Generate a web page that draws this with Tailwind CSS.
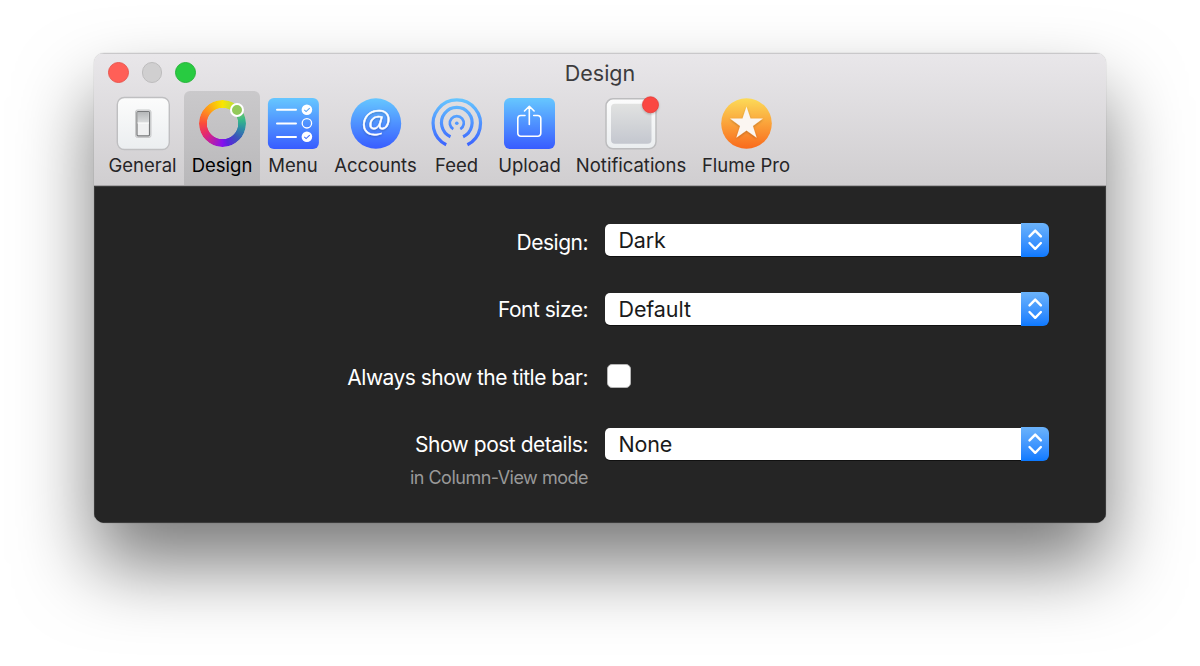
<!DOCTYPE html>
<html lang="en">
<head>
<meta charset="utf-8">
<title>Design</title>
<script src="https://cdn.jsdelivr.net/npm/@tailwindcss/browser@4"></script>
</head>
<body class="h-[666px] w-[1200px] overflow-hidden bg-white pl-[94px] pt-[53px] font-['Inter','Liberation_Sans',sans-serif]">
<svg class="absolute size-0" aria-hidden="true">
  <defs>
    <linearGradient id="blue" x1="0" y1="5" x2="0" y2="55" gradientUnits="userSpaceOnUse"><stop stop-color="#65c5ff"/><stop offset="1" stop-color="#385cff"/></linearGradient>
    <linearGradient id="orange" x1="0" y1="0" x2="0" y2="1"><stop stop-color="#fcdb58"/><stop offset="1" stop-color="#f96a1c"/></linearGradient>
    <linearGradient id="plate" x1="0" y1="0" x2="0" y2="1"><stop stop-color="#fcfcfc"/><stop offset="1" stop-color="#ebeef0"/></linearGradient>
    <linearGradient id="inset" x1="0" y1="0" x2="0" y2="1"><stop stop-color="#e1e2e1"/><stop offset="1" stop-color="#c4c7cf"/></linearGradient>
    <linearGradient id="knob" x1="0" y1="0" x2="0" y2="1"><stop stop-color="#b5b7b9"/><stop offset="1" stop-color="#dcdedf"/></linearGradient>
    <filter id="soft" x="-20%" y="-20%" width="140%" height="150%"><feDropShadow dx="0" dy="1" stdDeviation=".8" flood-color="#000" flood-opacity=".25"/></filter>
    <g id="arrows" fill="none" stroke="#fff" stroke-width="2.4" stroke-linecap="round" stroke-linejoin="round"><path d="M8.5 13.4 14.2 7.6l5.7 5.8M8.5 20l5.7 5.8 5.7-5.8"/></g>
  </defs>
</svg>
<main class="flex h-[470px] w-[1012px] flex-col overflow-hidden rounded-[10px] shadow-[0_0_1px_0_rgba(0,0,0,0.4),0_42px_76px_rgba(0,0,0,0.52)]">
  <header class="flex h-[133px] flex-col border-b border-[#a5a3a5] bg-linear-to-b from-[#e9e7ea] to-[#d0ced0] shadow-[inset_0_1px_0_#c9c8ca]">
    <div class="grid h-[38px] grid-cols-3 items-center">
      <div class="flex gap-[13px] pl-[14px] pt-px">
        <i class="size-[20.5px] rounded-full border border-[#e9574f] bg-[#ff5f57]"></i>
        <i class="size-[20.5px] rounded-full border border-[#bdbcbd] bg-[#d0cfd0]"></i>
        <i class="size-[20.5px] rounded-full border border-[#27b43a] bg-[#28cb41]"></i>
      </div>
      <h1 class="pt-px text-center text-[21.5px] leading-6 text-[#3c3b3d]">Design</h1>
    </div>
    <nav class="flex h-[94px] pl-[7px] text-[18.5px] leading-[22px] text-[#262527]">
      <div class="flex w-[83px] flex-col items-center pt-[3px]">
        <svg class="size-[60px]" viewBox="0 0 60 60"><rect x="4.3" y="3.5" width="52" height="52" rx="7" fill="url(#plate)" stroke="#bfbfc1" stroke-width="1.4"/><rect x="22.5" y="16" width="15.5" height="27.5" rx="2" fill="#e0e1e2" stroke="#c7c8c9"/><rect x="24" y="17.5" width="12.5" height="24.3" rx="1" fill="#eff0f1" stroke="#77797b" stroke-width="1.2"/><rect x="24.7" y="18" width="11.1" height="11" fill="url(#knob)"/><path d="M24.5 29h11.5" stroke="#fff"/></svg>
        <span class="whitespace-nowrap">General</span>
      </div>
      <div class="flex w-[76px] flex-col items-center rounded-t-[6px] bg-linear-to-b from-[#cac9cb] to-[#b9b8ba] pt-[3px] text-black">
        <div class="relative size-[60px]">
          <div class="ml-[6.5px] mt-[5.5px] size-[47.5px] rounded-full bg-[conic-gradient(#fae500_0deg,#c7df30_28deg,#7fc766_55deg,#36b889_80deg,#2e8da5_105deg,#3a52bb_135deg,#5c22df_165deg,#8610ee_180deg,#b51cad_208deg,#e52a6c_240deg,#fb4b3b_270deg,#ff8a20_305deg,#fbbf0c_335deg,#fae500_360deg)] [mask:radial-gradient(circle,transparent_15.3px,black_16px)]"></div>
          <i class="absolute left-[38px] top-[9px] size-[14px] rounded-full border-2 border-white bg-[#92c95a]"></i>
        </div>
        <span class="whitespace-nowrap">Design</span>
      </div>
      <div class="flex w-[66px] flex-col items-center pt-[3px]">
        <svg class="size-[60px]" viewBox="0 0 60 60" fill="none"><rect x="4.9" y="4" width="51" height="51" rx="6" fill="url(#blue)"/><path d="M14 15.7h19M14 29.5h19M14 43h19" stroke="#fff" stroke-width="2" stroke-linecap="round"/><circle cx="43.9" cy="15.8" r="5.3" fill="#fff"/><circle cx="43.9" cy="29.3" r="4.7" stroke="#fff" stroke-width="1.3"/><circle cx="43.9" cy="42.8" r="5.3" fill="#fff"/><path d="m41.3 15.9 1.8 1.7 3.6-3.5" stroke="#59a5f4" stroke-width="1.1"/><path d="m41.3 42.9 1.8 1.7 3.6-3.5" stroke="#456ff9" stroke-width="1.1"/></svg>
        <span class="whitespace-nowrap">Menu</span>
      </div>
      <div class="flex w-[99px] flex-col items-center pt-[3px]">
        <svg class="size-[60px]" viewBox="0 0 60 60"><circle cx="29.9" cy="29.5" r="25.3" fill="url(#blue)"/><text x="29.7" y="38" text-anchor="middle" textLength="29" lengthAdjust="spacingAndGlyphs" class="font-['Open_Sans',sans-serif] text-[31px] font-light italic" fill="#fff" stroke="#fff" stroke-width=".4" filter="url(#soft)">@</text></svg>
        <span class="whitespace-nowrap">Accounts</span>
      </div>
      <div class="flex w-[63px] flex-col items-center pt-[3px]">
        <svg class="size-[60px]" viewBox="0 0 60 60" fill="none" stroke="url(#blue)" stroke-width="3.2"><path d="M19.2 50.8A23.7 23.7 0 1 1 40.4 50.8"/><path d="M23.5 42.7A15.3 15.3 0 1 1 36.1 42.7"/><path d="M26.3 35.2A7 7 0 1 1 33.3 35.2" stroke-width="2.7"/><circle cx="29.8" cy="29.3" r="1.8" fill="#5198ff" stroke="none"/></svg>
        <span class="whitespace-nowrap">Feed</span>
      </div>
      <div class="flex w-[83px] flex-col items-center pt-[3px]">
        <svg class="size-[60px]" viewBox="0 0 60 60" fill="none"><rect x="4" y="4" width="51" height="51" rx="6" fill="url(#blue)"/><g stroke="#fff" stroke-width="1.6" stroke-linecap="round" stroke-linejoin="round"><path d="M25 21.5h-4.2a3 3 0 0 0-3 3v14.7a3 3 0 0 0 3 3h17a3 3 0 0 0 3-3V24.5a3 3 0 0 0-3-3h-4.1M29.3 30.5v-18M24.5 17l4.8-4.7 4.8 4.7"/></g></svg>
        <span class="whitespace-nowrap">Upload</span>
      </div>
      <div class="flex w-[120px] flex-col items-center pt-[3px]">
        <svg class="size-[60px]" viewBox="0 0 60 60"><rect x="5" y="4.8" width="50" height="50" rx="7" fill="url(#plate)" stroke="#bcbcbe" stroke-width="1.5"/><rect x="10" y="9.8" width="40.5" height="40" rx="4" fill="url(#inset)"/><circle cx="49.5" cy="10.8" r="8" fill="#fb4742" stroke="#e43d38" stroke-width=".8" filter="url(#soft)"/></svg>
        <span class="whitespace-nowrap">Notifications</span>
      </div>
      <div class="flex w-[110px] flex-col items-center pt-[3px]">
        <svg class="size-[60px]" viewBox="0 0 60 60"><circle cx="30.5" cy="29.5" r="25.3" fill="url(#orange)"/><path d="m30.5 12.5 4 11.9H47l-10.1 7.5 3.8 11.8-10.2-7.2-10.2 7.2 3.8-11.8L14 24.4h12.5Z" fill="#fbf6f1" filter="url(#soft)"/></svg>
        <span class="whitespace-nowrap">Flume Pro</span>
      </div>
    </nav>
  </header>
  <section class="grid flex-1 grid-cols-[494px_444px] content-start gap-x-[17px] bg-[#252525] pt-[37px] text-[21px] leading-8 text-white shadow-[inset_0_0_0_1px_#3b3b3b]">
    <label class="h-[69px] pt-[4px] text-right tracking-[-0.5px]">Design:</label>
    <div class="h-[69px]"><div class="flex h-[34px] items-center"><div class="h-8 flex-1 rounded-l-[5px] bg-white pl-[13.5px] text-[21.5px] tracking-[-0.2px] text-[#1a1a1a] shadow-[0_1px_0_#111]">Dark</div><svg class="h-[34px] w-7 rounded-r-[6px] bg-linear-to-b from-[#6bb3fb] to-[#0b79ff]" viewBox="0 0 28 34"><use href="#arrows"/></svg></div></div>
    <label class="h-[69px] pt-[2px] text-right tracking-[-0.5px]">Font size:</label>
    <div class="h-[69px]"><div class="flex h-[34px] items-center"><div class="h-8 flex-1 rounded-l-[5px] bg-white pl-[13.5px] text-[21.5px] tracking-[-0.1px] text-[#1a1a1a] shadow-[0_1px_0_#111]">Default</div><svg class="h-[34px] w-7 rounded-r-[6px] bg-linear-to-b from-[#6bb3fb] to-[#0b79ff]" viewBox="0 0 28 34"><use href="#arrows"/></svg></div></div>
    <label class="h-[66px] pt-px text-right tracking-[-0.52px]">Always show the title bar:</label>
    <div class="h-[66px] pl-[1.5px] pt-[3px]"><div class="size-[24px] rounded-[5px] border border-[#b5b5b5] bg-white"></div></div>
    <div class="pt-[2px] text-right"><label class="block h-[33px] tracking-[-0.48px]">Show post details:</label><p class="text-[18px] tracking-[-0.5px] text-[#999]">in Column-View mode</p></div>
    <div><div class="flex h-[34px] items-center"><div class="h-8 flex-1 rounded-l-[5px] bg-white pl-[13.5px] text-[21.5px] tracking-[-0.2px] text-[#1a1a1a] shadow-[0_1px_0_#111]">None</div><svg class="h-[34px] w-7 rounded-r-[6px] bg-linear-to-b from-[#6bb3fb] to-[#0b79ff]" viewBox="0 0 28 34"><use href="#arrows"/></svg></div></div>
  </section>
</main>
</body>
</html>
